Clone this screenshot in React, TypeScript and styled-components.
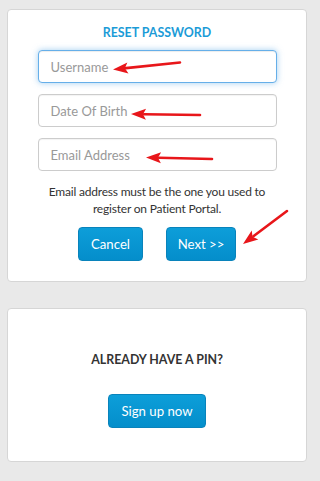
import React from "react";
import styled, { createGlobalStyle } from "styled-components";

const Global = createGlobalStyle`
  html, body { margin: 0; padding: 0; background: #e9e9e9; }
  body { font-family: Lato, "Open Sans", sans-serif; color: #333; }
  * { box-sizing: border-box; }
`;

const Page = styled.div`
  position: relative;
  width: 320px;
  min-height: 481px;
  padding: 9px 13px 20px 7px;
  display: flex;
  flex-direction: column;
  gap: 26px;
`;

const Card = styled.div<{ $pt: number; $pb: number }>`
  background: #fff;
  border: 1px solid #d6d6d6;
  border-radius: 4px;
  padding: ${(p) => p.$pt}px 0 ${(p) => p.$pb}px;
  display: flex;
  flex-direction: column;
  align-items: center;
`;

const Title = styled.h2<{ $color: string }>`
  margin: 0;
  font-size: 12.4px;
  line-height: 20px;
  font-weight: 700;
  color: ${(p) => p.$color};
`;

const Form = styled.div`
  margin-top: 7px;
  display: flex;
  flex-direction: column;
  gap: 11px;
  width: 239px;
`;

const Input = styled.input<{ $focus?: boolean }>`
  width: 100%;
  height: 33px;
  border: 1px solid ${(p) => (p.$focus ? "#66afe9" : "#cccccc")};
  border-radius: 4px;
  padding: 0 12px;
  font-family: Lato, "Open Sans", sans-serif;
  font-size: 13px;
  color: #555;
  outline: none;
  box-shadow: ${(p) =>
    p.$focus ? "inset 0 1px 1px rgba(0,0,0,.075), 0 0 6px rgba(102,175,233,.6)" : "inset 0 1px 1px rgba(0,0,0,.05)"};
  &::placeholder { color: #999; }
`;

const Note = styled.p`
  margin: 12px 0 0;
  width: 250px;
  text-align: center;
  font-size: 12px;
  letter-spacing: -0.2px;
  line-height: 17.4px;
  color: #333;
`;

const Buttons = styled.div<{ $mt: number }>`
  margin-top: ${(p) => p.$mt}px;
  display: flex;
  gap: 23px;
`;

const Button = styled.button<{ $w: number }>`
  width: ${(p) => p.$w}px;
  height: 34px;
  border: 1px solid #0983bb;
  border-radius: 4px;
  background: linear-gradient(#0d9ed9, #048ecb);
  color: #fff;
  font-family: Lato, "Open Sans", sans-serif;
  font-size: 13.2px;
  padding: 0;
  cursor: pointer;
`;

const Overlay = styled.svg`
  position: absolute;
  left: 0;
  top: 0;
  width: 320px;
  height: 481px;
  pointer-events: none;
`;

const arrows = [
  { x1: 180, y1: 62.5, x2: 113, y2: 69.5 },
  { x1: 200, y1: 115, x2: 131, y2: 114 },
  { x1: 212, y1: 159, x2: 146, y2: 157.5 },
  { x1: 287, y1: 211, x2: 243, y2: 244 },
];

function Arrow({ x1, y1, x2, y2 }: { x1: number; y1: number; x2: number; y2: number }) {
  const dx = x2 - x1;
  const dy = y2 - y1;
  const len = Math.hypot(dx, dy);
  const ux = dx / len;
  const uy = dy / len;
  const hl = 15;
  const hw = 5.5;
  const bx = x2 - ux * hl;
  const by = y2 - uy * hl;
  const px = -uy;
  const py = ux;
  const pts = `${x2},${y2} ${bx + px * hw},${by + py * hw} ${bx + ux * 3},${by + uy * 3} ${bx - px * hw},${by - py * hw}`;
  return (
    <g>
      <line x1={x1} y1={y1} x2={bx + ux * 2} y2={by + uy * 2} stroke="#e8161a" strokeWidth={2.6} strokeLinecap="round" />
      <polygon points={pts} fill="#e8161a" />
    </g>
  );
}

export default function App() {
  return (
    <>
      <Global />
      <Page>
        <Card $pt={13} $pb={20}>
          <Title $color="#1b9bd7">RESET PASSWORD</Title>
          <Form>
            <Input $focus placeholder="Username" />
            <Input placeholder="Date Of Birth" />
            <Input placeholder="Email Address" />
          </Form>
          <Note>Email address must be the one you used to register on Patient Portal.</Note>
          <Buttons $mt={9}>
            <Button $w={65}>Cancel</Button>
            <Button $w={70}>Next &gt;&gt;</Button>
          </Buttons>
        </Card>
        <Card $pt={41} $pb={33}>
          <Title $color="#333">ALREADY HAVE A PIN?</Title>
          <Buttons $mt={24}>
            <Button $w={98}>Sign up now</Button>
          </Buttons>
        </Card>
        <Overlay viewBox="0 0 320 481">
          {arrows.map((a, i) => (
            <Arrow key={i} {...a} />
          ))}
        </Overlay>
      </Page>
    </>
  );
}
